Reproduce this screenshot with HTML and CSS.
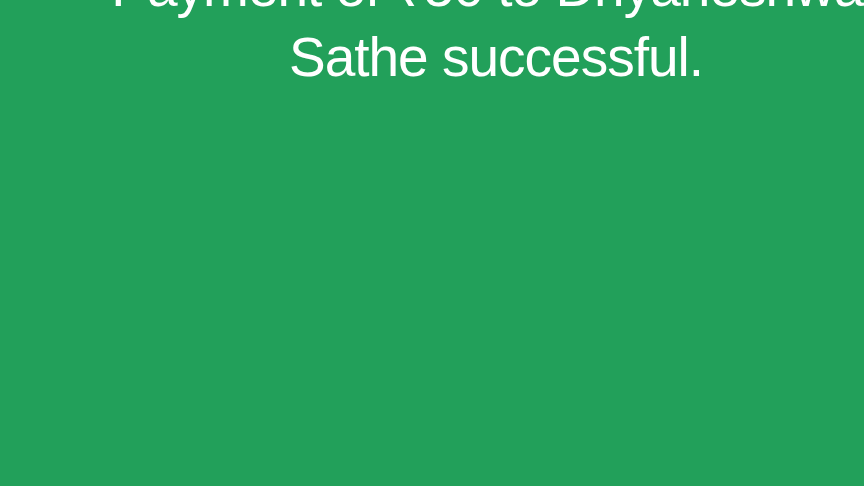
FILE: index.html
```html
<!DOCTYPE html>
<html lang="en">
<head>
<meta charset="utf-8">
<title>Payment successful</title>
<link rel="stylesheet" href="styles.css">
</head>
<body>
<main class="screen">
  <p class="message">Payment of ₹50 to Dnyaneshwar Sathe successful.</p>
</main>
</body>
</html>
```

FILE: styles.css
```css
html, body {
  margin: 0;
  padding: 0;
  width: 864px;
  height: 486px;
  overflow: hidden;
  background: #22a05a;
}
.screen {
  width: 864px;
  height: 486px;
  margin-left: 64px;
}
.message {
  margin: -48px 0 0 0;
  color: #ffffff;
  font-family: "Liberation Sans", Arial, sans-serif;
  font-size: 55px;
  line-height: 70px;
  text-align: center;
  letter-spacing: -1px;
  -webkit-text-stroke: 0;
}
```
